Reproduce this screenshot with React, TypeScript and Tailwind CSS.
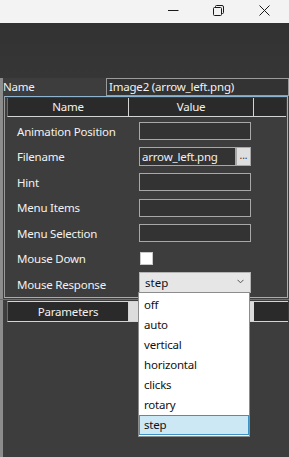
import React from "react";

const props = [
  { label: "Animation Position", kind: "text" },
  { label: "Filename", kind: "file", value: "arrow_left.png" },
  { label: "Hint", kind: "text" },
  { label: "Menu Items", kind: "text" },
  { label: "Menu Selection", kind: "text" },
  { label: "Mouse Down", kind: "check" },
  { label: "Mouse Response", kind: "select", value: "step" },
];

const options = ["off", "auto", "vertical", "horizontal", "clicks", "rotary", "step"];

function TitleBar() {
  return (
    <div className="h-[23px] bg-[#f3f3f3] relative">
      {/* minimize */}
      <svg className="absolute left-[168px] top-[5px]" width="11" height="11" viewBox="0 0 11 11">
        <path d="M0 5.5h10.5" stroke="#1a1a1a" strokeWidth="1" />
      </svg>
      {/* restore */}
      <svg className="absolute left-[213px] top-[5px]" width="11" height="11" viewBox="0 0 11 11" fill="none">
        <rect x="0.5" y="2.5" width="8" height="8" rx="1" stroke="#1a1a1a" />
        <path d="M2.5 2.5V1.5a1 1 0 0 1 1-1h5.5a1.5 1.5 0 0 1 1.5 1.5V7.5a1 1 0 0 1-1 1h-1" stroke="#1a1a1a" />
      </svg>
      {/* close */}
      <svg className="absolute left-[259px] top-[5px]" width="11" height="11" viewBox="0 0 11 11">
        <path d="M0.5 0.5l10 10M10.5 0.5l-10 10" stroke="#1a1a1a" strokeWidth="1" />
      </svg>
    </div>
  );
}

function ValueCell({ kind, value }: { kind: string; value?: string }) {
  if (kind === "file") {
    return (
      <div className="flex h-[19px] w-[112px]">
        <div className="flex-1 border border-[#a8a8a8] bg-[#333333] text-[11.5px] tracking-[-0.2px] leading-[17px] text-[#f0f0f0] pl-[2px]">{value}</div>
        <div className="w-[15px] border border-[#a8a8a8] bg-[#dedede] text-[10px] leading-[15px] text-[#333] text-center">...</div>
      </div>
    );
  }
  if (kind === "check") {
    return <div className="w-[13px] h-[13px] bg-white border border-[#c8c8c8] ml-[1px]" />;
  }
  if (kind === "select") {
    return (
      <div className="relative -top-[2px] w-[112px] h-[21px] bg-[#e6e6e6] border border-[#b4b4b4] flex items-center pl-[5px] text-[11.5px] text-[#111]">
        step
        <svg className="absolute right-[6px] top-[6px]" width="7" height="5" viewBox="0 0 7 5" fill="none">
          <path d="M0.5 0.8l3 3 3-3" stroke="#555" strokeWidth="1" />
        </svg>
      </div>
    );
  }
  return <div className="w-[112px] h-[18px] border border-[#a8a8a8] bg-[#333333]" />;
}

export default function App() {
  return (
    <div
      className="w-[289px] h-[457px] overflow-hidden bg-[#3d3d3d] relative"
      style={{ fontFamily: '"Noto Sans", "Open Sans", sans-serif' }}
    >
      <TitleBar />
      <div className="h-[55px] bg-gradient-to-b from-[#323232] to-[#363636]" />

      <div className="flex">
        <div className="w-[3px] bg-[#8c8c8c] shrink-0 h-[379px]" />
        <div className="flex-1 flex flex-col">
          {/* object name row */}
          <div className="flex h-[18px] items-center">
            <div className="w-[103px] text-[11.5px] tracking-[-0.2px] text-[#f2f2f2] leading-none">Name</div>
            <div className="flex-1 h-[18px] border border-[#9a9a9a] bg-[#333] text-[11.5px] tracking-[-0.2px] leading-[16px] text-[#f2f2f2] pl-[2px]">
              Image2 (arrow_left.png)
            </div>
          </div>

          {/* property grid */}
          <div className="ml-[1px] mr-[1px] h-[202px] border border-[#8fb4cf] border-l-[#9a9a9a] flex flex-col">
            <div className="ml-[2px] mr-[1px] mt-[1px] h-[19px] flex bg-[#2a2a2a] border-b border-[#d4d4d4] border-l border-l-[#6a6a6a] text-[11.5px] tracking-[-0.2px] text-[#f2f2f2]">
              <div className="w-[121px] flex items-center justify-center border-r border-[#d4d4d4]">Name</div>
              <div className="w-[125px] flex items-center justify-center border-r border-[#d4d4d4]">Value</div>
              <div className="flex-1" />
            </div>
            <div className="pt-[2px]">
              {props.map((p) => (
                <div key={p.label} className="h-[25.5px] flex items-center">
                  <div className="w-[134px] pl-[12px] text-[11.5px] tracking-[-0.2px] text-[#f2f2f2] whitespace-nowrap">{p.label}</div>
                  <ValueCell kind={p.kind} value={p.value} />
                </div>
              ))}
            </div>
          </div>

          <div className="h-[1px] bg-[#6e6e6e] mt-[1px] -ml-[3px]" />

          {/* parameters header */}
          <div className="ml-[4px] mr-[1px] mt-[1px] h-[21px] flex bg-[#2a2a2a] border-b border-t border-[#d4d4d4] border-l border-l-[#6a6a6a] text-[11.5px] tracking-[-0.2px] text-[#f2f2f2]">
            <div className="w-[121px] flex items-center justify-center border-r border-[#d4d4d4]">Parameters</div>
            <div className="w-[125px] bg-[#dcdcdc]" />
            <div className="flex-1" />
          </div>
        </div>
      </div>

      {/* open dropdown list */}
      <div className="absolute left-[138px] top-[292px] w-[112px] bg-white border border-[#8c8c8c] pt-[2px] pb-[1px] text-[11.5px] tracking-[-0.2px] text-[#111]">
        {options.map((o) => (
          <div
            key={o}
            className={
              o === "step"
                ? "h-[20px] leading-[18px] pl-[4px] bg-[#cce8f5] border border-[#3d93c4]"
                : "h-[20px] leading-[20px] pl-[5px]"
            }
          >
            {o}
          </div>
        ))}
      </div>
    </div>
  );
}
